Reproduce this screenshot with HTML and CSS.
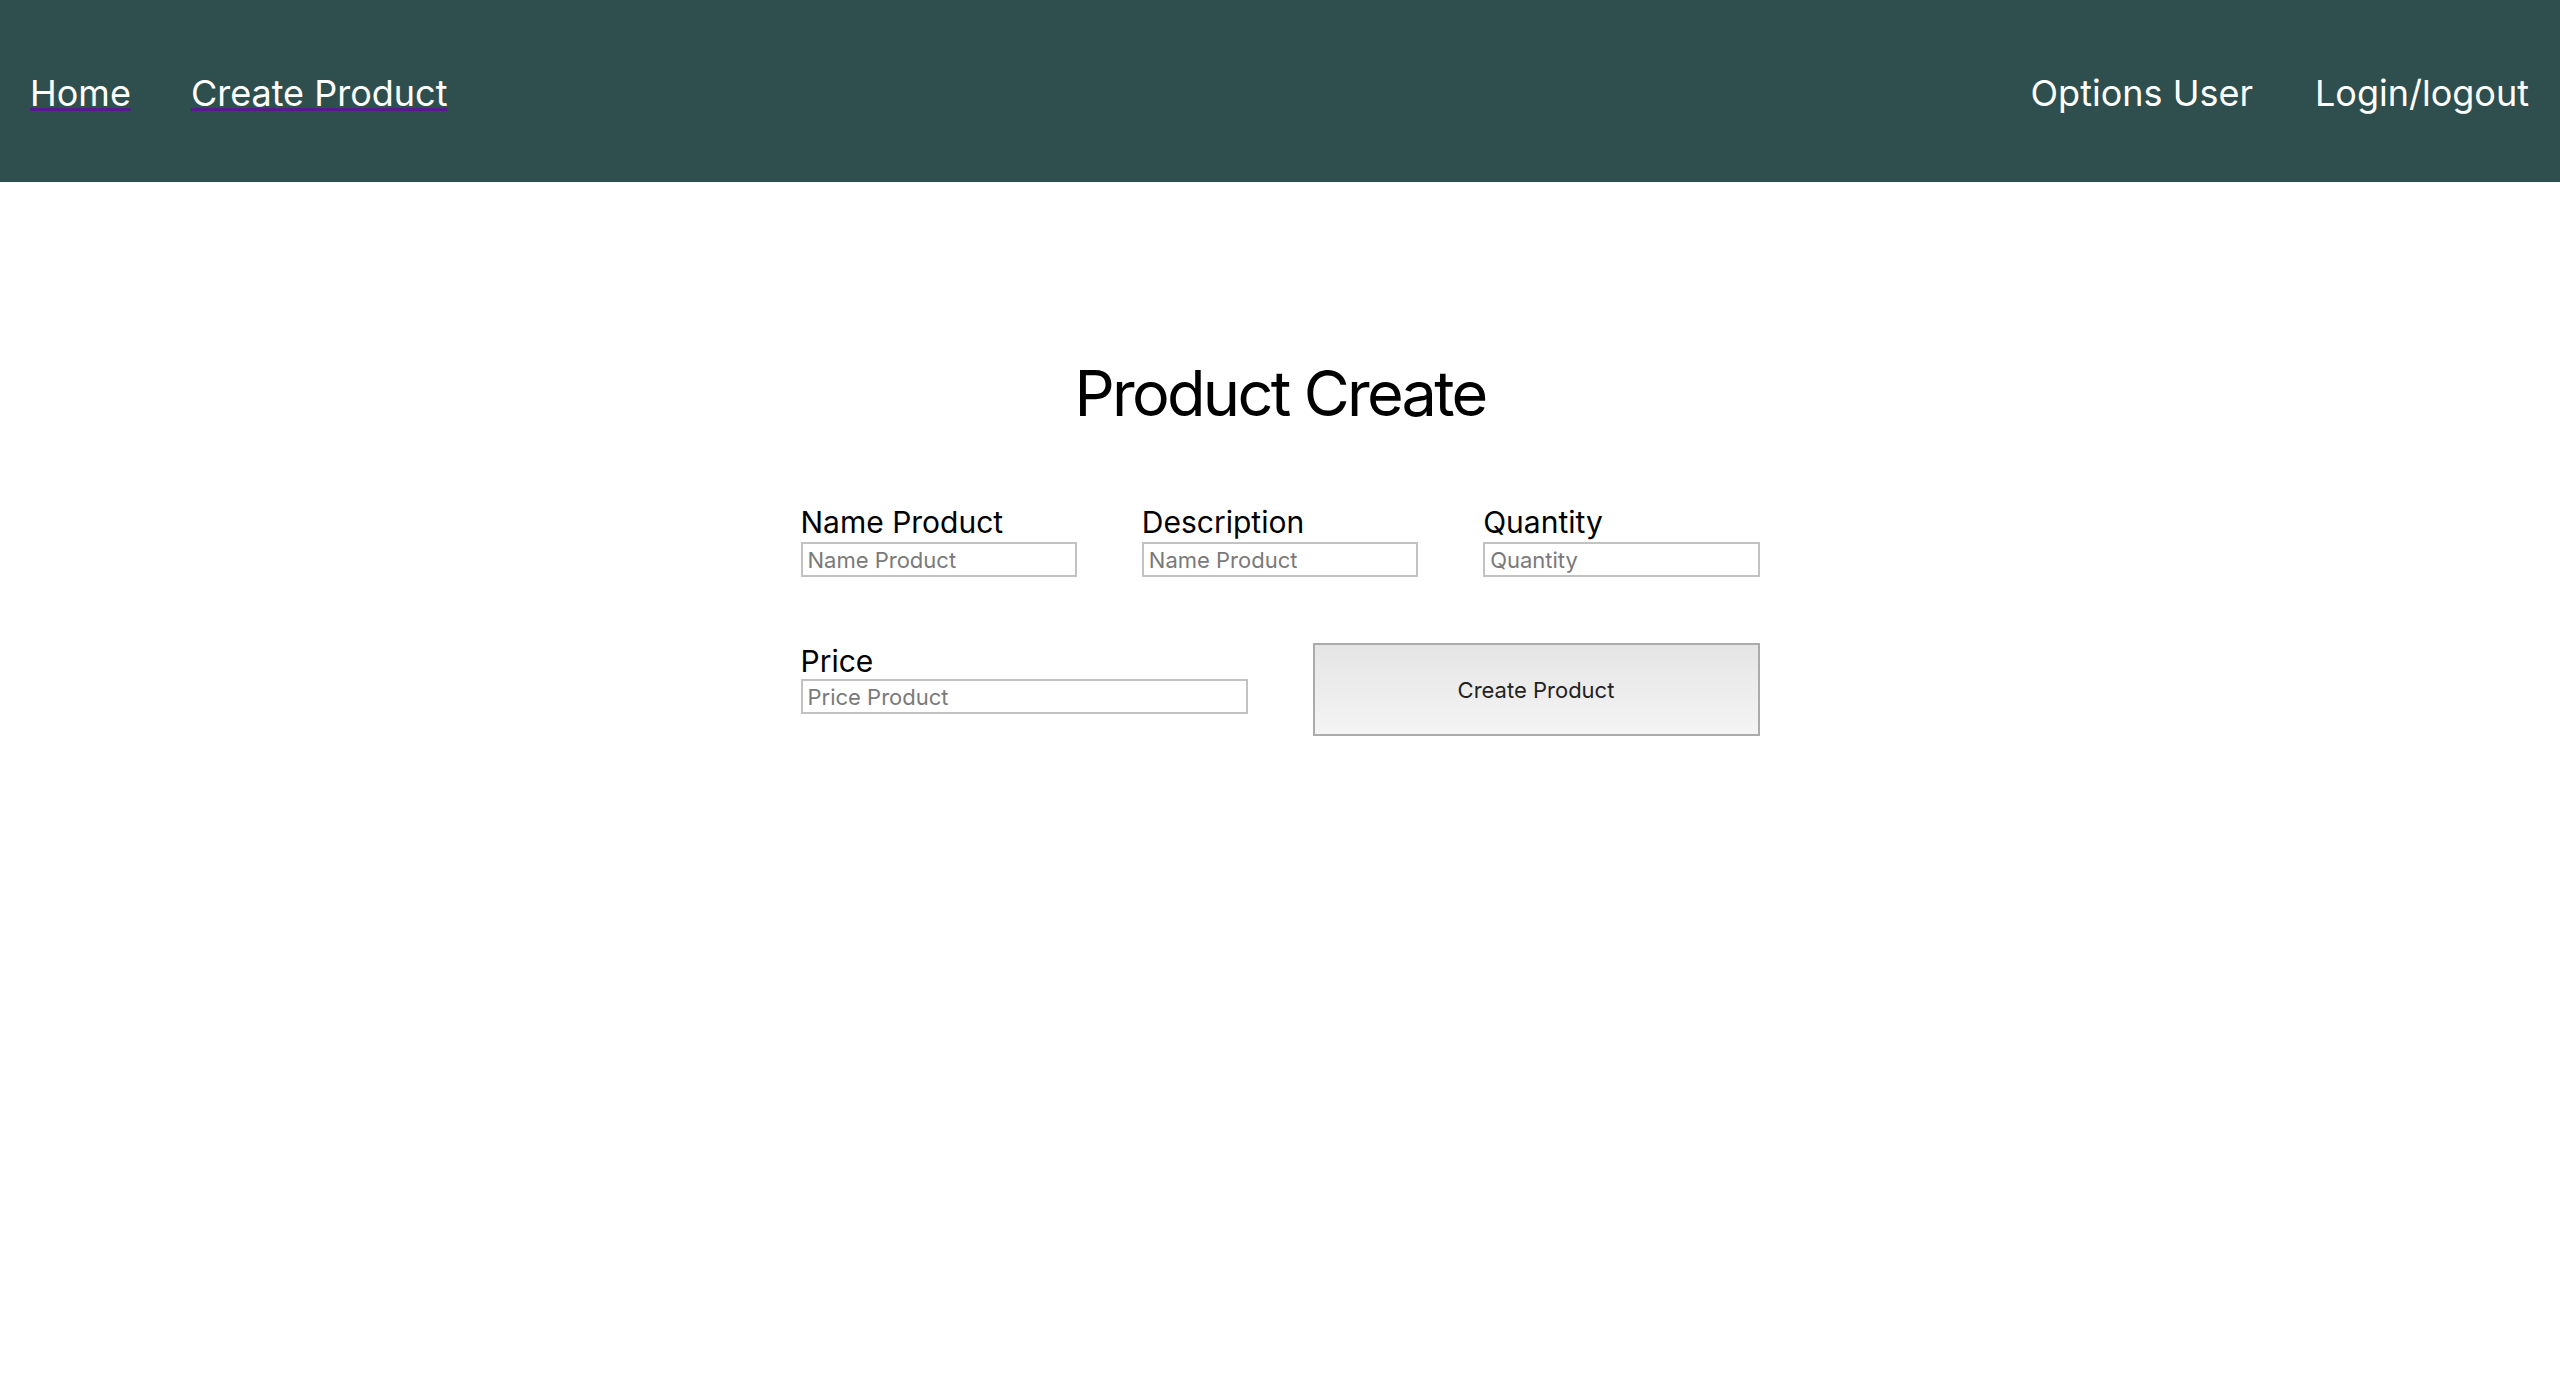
FILE: index.html
```html
<!DOCTYPE html>
<html lang="en">
<head>
<meta charset="utf-8">
<title>Product Create</title>
<link rel="stylesheet" href="styles.css">
</head>
<body>
<header class="navbar">
  <nav class="nav-group">
    <a class="nav-link visited" href="#">Home</a>
    <a class="nav-link visited" href="#">Create Product</a>
  </nav>
  <nav class="nav-group nav-right">
    <span class="nav-link">Options User</span>
    <span class="nav-link">Login/logout</span>
  </nav>
</header>
<main class="page">
  <h1 class="title">Product Create</h1>
  <form class="product-form">
    <div class="form-row three">
      <div class="field">
        <label class="field-label" for="name">Name Product</label>
        <input class="field-input" id="name" type="text" placeholder="Name Product">
      </div>
      <div class="field">
        <label class="field-label" for="desc">Description</label>
        <input class="field-input" id="desc" type="text" placeholder="Name Product">
      </div>
      <div class="field">
        <label class="field-label" for="qty">Quantity</label>
        <input class="field-input" id="qty" type="text" placeholder="Quantity">
      </div>
    </div>
    <div class="form-row two">
      <div class="field">
        <label class="field-label" for="price">Price</label>
        <input class="field-input price" id="price" type="text" placeholder="Price Product">
      </div>
      <button class="submit" type="button">Create Product</button>
    </div>
  </form>
</main>
</body>
</html>
```

FILE: styles.css
```css
html, body {
  margin: 0;
  padding: 0;
  background: #ffffff;
  font-family: Inter, "Noto Sans", "Liberation Sans", sans-serif;
  color: #000;
}

.navbar {
  height: 182px;
  background: #2f4f4f;
  display: flex;
  align-items: center;
  justify-content: space-between;
  padding: 0 31px 0 30px;
  box-sizing: border-box;
}

.nav-group {
  display: flex;
  align-items: center;
  gap: 60px;
  padding-top: 4px;
}

.nav-right {
  gap: 62px;
}

.nav-link {
  color: #ffffff;
  font-size: 36px;
  line-height: 44px;
  text-decoration: none;
}

.nav-link.visited {
  text-decoration-line: underline;
  text-decoration-color: #551a8b;
  text-decoration-thickness: 3px;
  text-underline-offset: 2px;
}

.page {
  display: flex;
  flex-direction: column;
  align-items: center;
  padding-top: 173px;
}

.title {
  margin: 0;
  font-size: 63px;
  font-weight: 400;
  line-height: 77px;
  letter-spacing: -2.7px;
}

.product-form {
  width: 959px;
  margin-top: 72px;
  display: flex;
  flex-direction: column;
  gap: 66px;
}

.form-row {
  display: grid;
  column-gap: 65px;
  align-items: start;
}

.form-row.three {
  grid-template-columns: repeat(3, minmax(0, 1fr));
}

.form-row.two {
  grid-template-columns: repeat(2, minmax(0, 1fr));
}

.field {
  display: flex;
  flex-direction: column;
  min-width: 0;
}

.field-label {
  font-size: 30px;
  line-height: 36px;
  white-space: nowrap;
}

.field-input {
  width: 100%;
  min-width: 0;
  margin: 2px 0 0;
  height: 35px;
  box-sizing: border-box;
  border: 2px solid #c2c2c2;
  padding: 0 5px;
  font-family: inherit;
  font-size: 22px;
  color: #000;
  background: #fff;
  outline: none;
}

.field-input.price {
  margin-top: 0;
}

.field-input::placeholder {
  color: #7a7a7a;
}

.submit {
  height: 93px;
  box-sizing: border-box;
  border: 2px solid #ababab;
  background: linear-gradient(#e5e5e5, #f4f4f4);
  font-family: inherit;
  font-size: 22px;
  color: #222;
  padding: 0;
}
```
